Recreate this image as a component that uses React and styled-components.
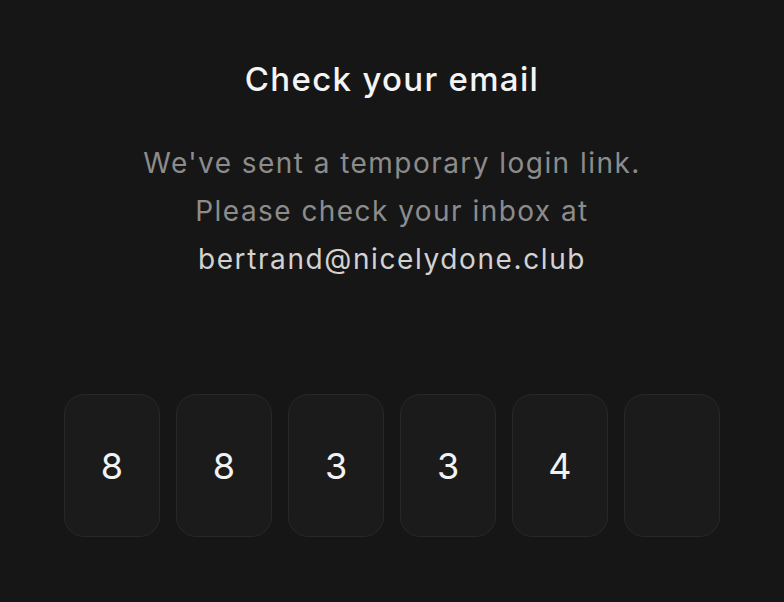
import React from 'react';
import styled, { createGlobalStyle } from 'styled-components';

const GlobalStyle = createGlobalStyle`
  html, body {
    margin: 0;
    padding: 0;
    background: #161616;
  }
  body {
    font-family: Inter, "Noto Sans", sans-serif;
    -webkit-font-smoothing: antialiased;
  }
`;

const Page = styled.div`
  width: 784px;
  height: 602px;
  box-sizing: border-box;
  padding-top: 56px;
  display: flex;
  flex-direction: column;
  align-items: center;
  background: #161616;
`;

const Title = styled.h1`
  margin: 0;
  font-size: 33px;
  line-height: 46px;
  font-weight: 500;
  color: #f4f4f4;
  letter-spacing: 1.3px;
`;

const Message = styled.p`
  margin: 37px 0 0;
  font-size: 28px;
  line-height: 48px;
  font-weight: 400;
  color: #8c8c8c;
  text-align: center;
  letter-spacing: 1.45px;
`;

const Email = styled.span`
  color: #d2d2d2;
  letter-spacing: 1.6px;
`;

const CodeRow = styled.div`
  margin-top: 111px;
  display: flex;
  gap: 16px;
`;

const Digit = styled.div`
  width: 96px;
  height: 143px;
  box-sizing: border-box;
  border: 1.5px solid #282828;
  border-radius: 20px;
  background: #1b1b1b;
  display: flex;
  align-items: center;
  justify-content: center;
  font-size: 36px;
  font-weight: 400;
  color: #f2f2f2;
`;

const code = ['8', '8', '3', '3', '4', ''];

export default function App() {
  return (
    <Page>
      <GlobalStyle />
      <Title>Check your email</Title>
      <Message>
        We've sent a temporary login link.
        <br />
        Please check your inbox at
        <br />
        <Email>bertrand@nicelydone.club</Email>
      </Message>
      <CodeRow>
        {code.map((d, i) => (
          <Digit key={i}>{d}</Digit>
        ))}
      </CodeRow>
    </Page>
  );
}
